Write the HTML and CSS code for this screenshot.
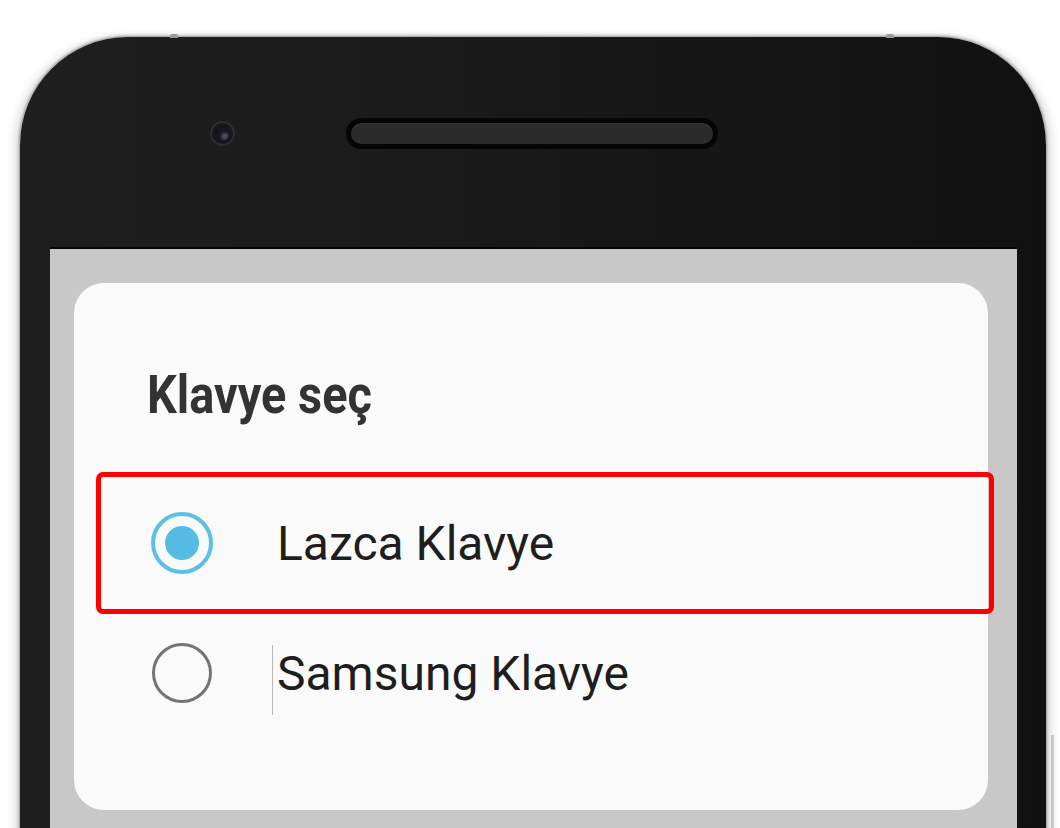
FILE: index.html
```html
<!DOCTYPE html>
<html lang="tr">
<head>
<meta charset="utf-8">
<title>Klavye seç</title>
<link rel="stylesheet" href="styles.css">
</head>
<body>
<div class="stage">
  <div class="phone">
    <div class="bump bump-left"></div>
    <div class="bump bump-right"></div>
    <div class="bezel">
      <div class="camera"><div class="lens"></div></div>
      <div class="speaker"></div>
    </div>
    <div class="screen">
      <div class="dialog">
        <h1 class="title"><span>Klavye seç</span></h1>
        <div class="options">
          <div class="option option-selected">
            <span class="radio radio-on"><span class="dot"></span></span>
            <span class="label">Lazca Klavye</span>
          </div>
          <div class="option">
            <span class="radio radio-off"></span>
            <span class="cursor"></span>
            <span class="label">Samsung Klavye</span>
          </div>
        </div>
      </div>
    </div>
  </div>
  <div class="side-line"></div>
</div>
</body>
</html>
```

FILE: styles.css
```css
* { box-sizing: border-box; }

html, body {
  margin: 0;
  padding: 0;
  background: #ffffff;
  width: 1060px;
  height: 828px;
  overflow: hidden;
  font-family: "Roboto", "Liberation Sans", sans-serif;
}

.stage {
  position: relative;
  width: 1060px;
  height: 828px;
  overflow: hidden;
  padding: 37px 14px 0 20px;
}

.phone {
  position: relative;
  width: 1026px;
  height: 900px;
  border-radius: 108px 108px 0 0;
  background: linear-gradient(90deg, #1f1f1f 0%, #1a1a1a 40%, #111111 100%);
  box-shadow: 0 0 3px 1px rgba(0,0,0,0.35), -6px 0 8px rgba(0,0,0,0.12), 6px 0 8px rgba(0,0,0,0.12);
  padding: 0 29px 0 30px;
  display: flex;
  flex-direction: column;
}

.bump {
  position: absolute;
  top: -3px;
  width: 8px;
  height: 4px;
  background: #9a9a9a;
  border-radius: 2px 2px 0 0;
}
.bump-left { left: 150px; }
.bump-right { left: 866px; }

.bezel {
  height: 210px;
  display: flex;
  align-items: center;
  padding: 0 0 18px 160px;
}

.camera {
  width: 25px;
  height: 25px;
  border-radius: 50%;
  background: #17161b;
  border: 2px solid #2e2d33;
  display: flex;
  align-items: center;
  justify-content: center;
}
.lens {
  width: 15px;
  height: 15px;
  border-radius: 50%;
  background: radial-gradient(circle at 65% 68%, #4a4a5a 0 12%, #1a1726 35%, #110f18 100%);
}

.speaker {
  margin-left: 111px;
  width: 372px;
  height: 31px;
  border-radius: 16px;
  background: #2b2b2b;
  border: 5px solid #050505;
  box-shadow: inset 0 1px 2px rgba(255,255,255,0.06);
}

.screen {
  flex: 1;
  background: #c8c8c8;
  border-top: 2px solid #050505;
  padding: 34px 29px 0 24px;
}

.dialog {
  height: 527px;
  background: #fafafa;
  border-radius: 30px;
  padding: 82px 0 0 22px;
  display: flex;
  flex-direction: column;
}

.title {
  margin: 0 0 0 51px;
  font-size: 53px;
  font-weight: 700;
  color: #333333;
  line-height: 60px;
  height: 60px;
  white-space: nowrap;
}
.title span {
  display: inline-block;
  transform: scaleX(0.885);
  transform-origin: left center;
}

.options {
  margin-top: 47px;
  display: flex;
  flex-direction: column;
  margin-right: -6px;
}

.option {
  position: relative;
  display: flex;
  align-items: center;
  height: 118px;
  padding-left: 55px;
}

.option-selected {
  height: 142px;
  border: 5px solid #ff0000;
  border-radius: 7px;
  padding-left: 50px;
}

.radio {
  width: 62px;
  height: 62px;
  border-radius: 50%;
  flex: none;
  display: flex;
  align-items: center;
  justify-content: center;
}
.radio-on {
  border: 4px solid #5cc0e5;
}
.dot {
  width: 34px;
  height: 34px;
  border-radius: 50%;
  background: #55bde3;
}
.radio-off {
  width: 60px;
  height: 60px;
  border: 3px solid #747474;
  margin-left: 1px;
}

.label {
  margin-left: 64px;
  font-size: 48px;
  color: #1e1e1e;
  white-space: nowrap;
}

.cursor {
  position: absolute;
  left: 176px;
  top: 31px;
  width: 1px;
  height: 70px;
  background: #b8b8b8;
}
.option .cursor + .label { margin-left: 65px; }

.side-line {
  position: absolute;
  left: 1051px;
  top: 735px;
  width: 3px;
  height: 100px;
  background: #c9c9c9;
}
```
